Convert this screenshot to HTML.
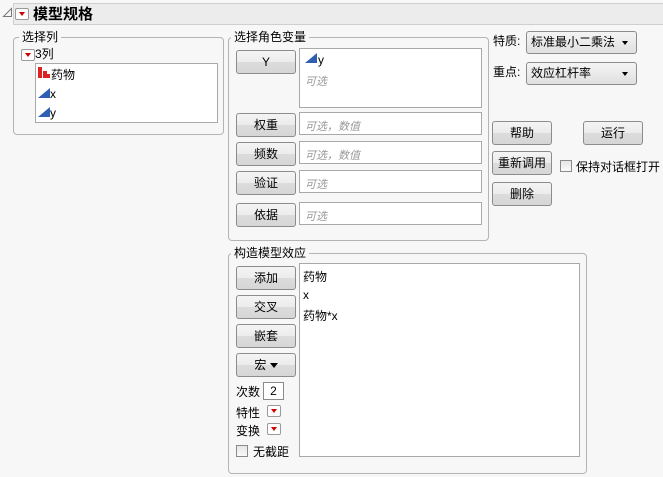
<!DOCTYPE html>
<html><head><meta charset="utf-8"><style>
*{box-sizing:border-box;margin:0;padding:0}
body{width:663px;height:477px;background:#f7f7f7;font-family:"Liberation Sans","Noto Sans CJK SC",sans-serif;font-size:12px;color:#000;position:relative;overflow:hidden}
.a{position:absolute}
.grp{position:absolute;border:1px solid #b4b4b4;border-radius:4px}
.lbl{position:absolute;background:#f7f7f7;padding:0 3px;font-size:12px;line-height:14px}
.btn{position:absolute;width:60px;height:24px;border:1px solid #8c8c8c;border-radius:3px;background:linear-gradient(#f4f4f4 0%,#ececec 50%,#dcdcdc 51%,#d6d6d6 100%);text-align:center;line-height:22px;font-size:12px}
.box{position:absolute;background:#fff;border:1px solid #a9a9a9}
.ph{color:#9a9a9a;font-style:italic;font-size:11px}
.rb{position:absolute;width:14px;height:12px;border:1px solid #9a9a9a;border-radius:2px;background:#fff}
.rb:after{content:"";position:absolute;left:3px;top:3px;border-left:3.5px solid transparent;border-right:3.5px solid transparent;border-top:4px solid #d00000}
.tri{position:absolute;width:0;height:0;border-left:12px solid transparent;border-bottom:10px solid #2f5fb3}
.dd{position:absolute;width:111px;height:23px;border:1px solid #8c8c8c;border-radius:3px;background:linear-gradient(#f4f4f4,#e0e0e0);line-height:21px;padding-left:4px}
.dd:after{content:"";position:absolute;right:8px;top:9px;border-left:3.5px solid transparent;border-right:3.5px solid transparent;border-top:4px solid #000}
.cb{position:absolute;width:12px;height:12px;border:1px solid #8a8a8a;background:linear-gradient(#e6e6e6,#fafafa)}
</style></head><body>
<div class="a" style="left:13px;top:3px;width:650px;height:22px;background:#ececec;border:1px solid #cfcfcf;border-right:none"></div>
<svg class="a" style="left:2px;top:7px" width="11" height="11"><path d="M1.5 9.5 L9.5 1.5 L9.5 9.5 Z" fill="none" stroke="#777" stroke-width="1"/></svg>
<div class="rb" style="left:15px;top:8px"></div>
<div class="a" style="left:33px;top:6px;font-size:15px;font-weight:bold;line-height:18px">模型规格</div>

<div class="grp" style="left:13px;top:37px;width:211px;height:98px"></div>
<div class="lbl" style="left:19px;top:30px">选择列</div>
<div class="rb" style="left:21px;top:49px"></div>
<div class="a" style="left:35px;top:47px;line-height:14px">3列</div>
<div class="box" style="left:35px;top:63px;width:183px;height:60px"></div>
<div class="a" style="left:38px;top:67px;width:4px;height:11px;background:#d22"></div>
<div class="a" style="left:43px;top:71px;width:4px;height:7px;background:#d22"></div>
<div class="a" style="left:47px;top:74px;width:3px;height:4px;background:#d22"></div>
<div class="a" style="left:51px;top:68px;line-height:14px">药物</div>
<div class="tri" style="left:38px;top:88px"></div><div class="a" style="left:50px;top:87px;line-height:14px">x</div>
<div class="tri" style="left:38px;top:107px"></div><div class="a" style="left:50px;top:106px;line-height:14px">y</div>

<div class="grp" style="left:228px;top:37px;width:261px;height:204px"></div>
<div class="lbl" style="left:231px;top:30px">选择角色变量</div>
<div class="btn" style="left:236px;top:50px">Y</div>
<div class="box" style="left:299px;top:48px;width:183px;height:60px"></div>
<div class="tri" style="left:305px;top:53px"></div><div class="a" style="left:318px;top:53px;line-height:14px">y</div>
<div class="a ph" style="left:305px;top:73px">可选</div>
<div class="btn" style="left:236px;top:113px">权重</div><div class="box" style="left:299px;top:112px;width:183px;height:23px"></div><div class="a ph" style="left:305px;top:118px">可选，数值</div>
<div class="btn" style="left:236px;top:142px">频数</div><div class="box" style="left:299px;top:141px;width:183px;height:23px"></div><div class="a ph" style="left:305px;top:147px">可选，数值</div>
<div class="btn" style="left:236px;top:171px">验证</div><div class="box" style="left:299px;top:170px;width:183px;height:23px"></div><div class="a ph" style="left:305px;top:176px">可选</div>
<div class="btn" style="left:236px;top:203px">依据</div><div class="box" style="left:299px;top:202px;width:183px;height:23px"></div><div class="a ph" style="left:305px;top:208px">可选</div>

<div class="a" style="left:493px;top:32px">特质:</div>
<div class="dd" style="left:526px;top:31px">标准最小二乘法</div>
<div class="a" style="left:493px;top:63px">重点:</div>
<div class="dd" style="left:526px;top:62px">效应杠杆率</div>
<div class="btn" style="left:492px;top:121px">帮助</div>
<div class="btn" style="left:583px;top:121px">运行</div>
<div class="btn" style="left:492px;top:151px">重新调用</div>
<div class="cb" style="left:560px;top:160px"></div><div class="a" style="left:576px;top:158px">保持对话框打开</div>
<div class="btn" style="left:492px;top:182px">删除</div>

<div class="grp" style="left:228px;top:253px;width:359px;height:221px"></div>
<div class="lbl" style="left:231px;top:246px">构造模型效应</div>
<div class="btn" style="left:236px;top:266px">添加</div>
<div class="btn" style="left:236px;top:295px">交叉</div>
<div class="btn" style="left:236px;top:324px">嵌套</div>
<div class="btn" style="left:236px;top:353px">宏 <span style="display:inline-block;vertical-align:middle;border-left:4px solid transparent;border-right:4px solid transparent;border-top:5px solid #000"></span></div>
<div class="a" style="left:236px;top:383px">次数</div>
<div class="a" style="left:263px;top:382px;width:21px;height:18px;background:#fff;border:1px solid #8a8a8a;text-align:center;line-height:16px">2</div>
<div class="a" style="left:236px;top:404px">特性</div><div class="rb" style="left:267px;top:405px"></div>
<div class="a" style="left:236px;top:422px">变换</div><div class="rb" style="left:267px;top:423px"></div>
<div class="cb" style="left:236px;top:445px"></div><div class="a" style="left:253px;top:443px">无截距</div>
<div class="box" style="left:299px;top:263px;width:281px;height:194px"></div>
<div class="a" style="left:303px;top:268px">药物</div>
<div class="a" style="left:303px;top:288px">x</div>
<div class="a" style="left:303px;top:307px">药物*x</div>
</body></html>
